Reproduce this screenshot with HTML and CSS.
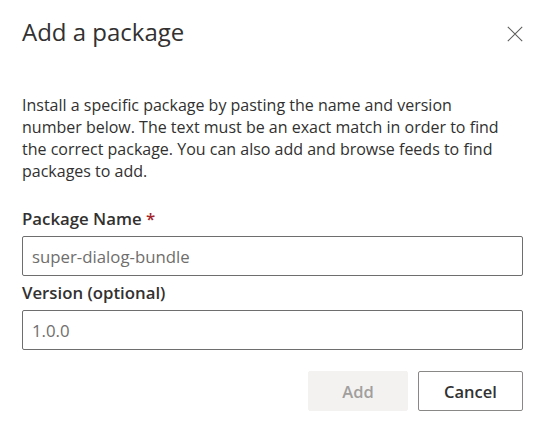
FILE: index.html
```html
<!DOCTYPE html>
<html lang="en">
<head>
<meta charset="utf-8">
<title>Add a package</title>
<link rel="stylesheet" href="styles.css">
</head>
<body>
<div class="dialog">
  <div class="header">
    <h1 class="title">Add a package</h1>
    <button class="close" aria-label="Close">
      <svg width="16" height="16" viewBox="0 0 16 16"><path d="M0.8 0.8 L15.2 15.2 M15.2 0.8 L0.8 15.2" stroke="#605e5c" stroke-width="1.1" fill="none"/></svg>
    </button>
  </div>
  <p class="subtext">Install a specific package by pasting the name and version number below. The text must be an exact match in order to find the correct package. You can also add and browse feeds to find packages to add.</p>
  <div class="field">
    <label class="label">Package Name <span class="req">*</span></label>
    <input class="input" type="text" placeholder="super-dialog-bundle">
  </div>
  <div class="field">
    <label class="label">Version (optional)</label>
    <input class="input" type="text" placeholder="1.0.0">
  </div>
  <div class="footer">
    <button class="btn btn-disabled" disabled>Add</button>
    <button class="btn btn-default">Cancel</button>
  </div>
</div>
</body>
</html>
```
FILE: styles.css
```css
html, body {
  margin: 0;
  padding: 0;
  background: #ffffff;
}
body {
  font-family: "Open Sans", "Noto Sans", sans-serif;
  color: #323130;
}
.dialog {
  width: 537px;
  box-sizing: border-box;
  padding: 16px 0 0 22px;
}
.header {
  display: flex;
  align-items: flex-start;
  justify-content: space-between;
  width: 509px;
}
.title {
  margin: 0;
  font-size: 24px;
  font-weight: 400;
  line-height: 32px;
  color: #323130;
}
.close {
  width: 32px;
  height: 32px;
  margin-top: 2px;
  border: none;
  background: transparent;
  padding: 0;
  display: flex;
  align-items: center;
  justify-content: center;
}
.subtext {
  margin: 44px 0 0 0;
  max-width: 482px;
  font-size: 16px;
  line-height: 22px;
  color: #323130;
}
.field {
  display: flex;
  flex-direction: column;
  width: 501px;
}
.subtext + .field {
  margin-top: 25px;
}
.field + .field {
  margin-top: 5px;
}
.label {
  font-size: 16.8px;
  font-weight: 600;
  line-height: 24px;
  margin-bottom: 5px;
  color: #323130;
}
.req {
  color: #a4262c;
}
.input {
  box-sizing: border-box;
  height: 40px;
  border: 1px solid #6e6e6e;
  border-radius: 2px;
  padding: 0 9px;
  font-family: inherit;
  font-size: 16.8px;
  color: #323130;
  background: #ffffff;
}
.input::placeholder {
  color: #6f6e6d;
  opacity: 1;
}
.footer {
  display: flex;
  justify-content: flex-end;
  gap: 10px;
  width: 501px;
  margin-top: 21px;
}
.btn {
  box-sizing: border-box;
  height: 40px;
  border-radius: 2px;
  font-family: inherit;
  font-size: 16.5px;
  font-weight: 600;
  padding: 0;
}
.btn-disabled {
  width: 100px;
  background: #f3f2f1;
  border: 1px solid #f3f2f1;
  color: #a19f9d;
}
.btn-default {
  width: 105px;
  background: #ffffff;
  border: 1px solid #8a8886;
  color: #323130;
}
```
